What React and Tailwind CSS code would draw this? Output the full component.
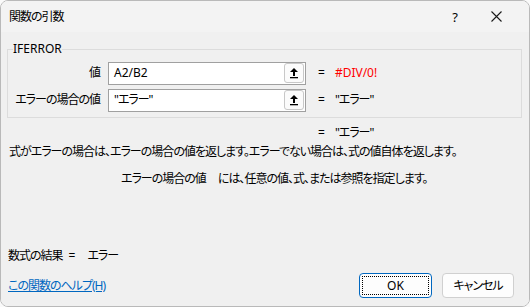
import React from "react";

const jp = "font-['Segoe_UI','Noto_Sans','Noto_Sans_CJK_JP',sans-serif] [font-feature-settings:'palt'] tracking-[-1px]";

const RefButton = () => (
  <span className="flex h-[20px] w-[20px] items-center justify-center rounded-[3px] border border-[#c8c8c8] bg-[#fbfbfb]">
    <svg width="10" height="12" viewBox="0 0 10 12">
      <path d="M5 1 L9 5 L6 5 L6 9 L4 9 L4 5 L1 5 Z" fill="#000" />
      <rect x="1" y="10" width="8" height="1.3" fill="#000" />
    </svg>
  </span>
);

const ArgRow = ({ label, value, result, red }) => (
  <div className="flex h-[22px] items-center">
    <div className="w-[92px] whitespace-nowrap text-right">{label}</div>
    <div className="ml-[8px] flex h-[23px] w-[198px] items-center justify-between border border-[#a0a0a0] bg-white pl-[5px] pr-[1px]">
      <span>{value}</span>
      <RefButton />
    </div>
    <span className="ml-[12px]">=</span>
    <span className={`ml-[11px] ${red ? "tracking-normal text-[#ff0000]" : ""}`}>{result}</span>
  </div>
);

export default function App() {
  return (
    <div className="h-[307px] w-[530px] bg-[#fafafa]">
      <div className={`flex h-full w-full flex-col overflow-hidden rounded-[8px] border border-[#b9b9b9] text-[12px] leading-[16px] text-[#000] ${jp}`}>
        <div className="flex h-[31px] shrink-0 items-center bg-[#f3f3f3] pl-[8px]">
          <span className="flex-1">関数の引数</span>
          <span className="mr-[34px] text-[13px]">?</span>
          <svg className="mr-[27px]" width="11" height="11" viewBox="0 0 11 11">
            <path d="M0.5 0.5 L10.5 10.5 M10.5 0.5 L0.5 10.5" stroke="#1a1a1a" strokeWidth="1.1" />
          </svg>
        </div>
        <div className="flex flex-1 flex-col bg-[#f0f0f0] px-[6px]">
          <fieldset className="mt-[9px] w-[515px] border border-[#dcdcdc] px-0 pb-[6px] pt-[5px]">
            <legend className="ml-[5px] px-0 tracking-normal">IFERROR</legend>
            <div className="flex flex-col gap-[5px]">
              <ArgRow label="値" value={<span className="tracking-normal">A2/B2</span>} result="#DIV/0!" red />
              <ArgRow label="エラーの場合の値" value={'"エラー"'} result={'"エラー"'} />
            </div>
          </fieldset>
          <div className="ml-[311px] mt-[7px] flex">
            <span>=</span>
            <span className="ml-[11px]">"エラー"</span>
          </div>
          <div className="ml-[2px] mt-[3px] whitespace-nowrap">式がエラーの場合は、エラーの場合の値を返します。エラーでない場合は、式の値自体を返します。</div>
          <div className="ml-[114px] mt-[11px] flex whitespace-nowrap">
            <span>エラーの場合の値</span>
            <span className="ml-[12px]">には、任意の値、式、または参照を指定します。</span>
          </div>
          <div className="ml-[1px] mt-[61px] flex">
            <span>数式の結果</span>
            <span className="ml-[6px]">=</span>
            <span className="ml-[13px]">エラー</span>
          </div>
          <div className="mt-[9px] flex items-center">
            <a href="#" className="ml-[1px] flex-1 text-[#0067c0] underline">この関数のヘルプ(H)</a>
            <button className="flex h-[25px] w-[73px] items-center justify-center rounded-[4px] border border-[#0067c0] bg-[#fdfdfd] p-[2px] tracking-normal">
              <span className="flex h-full w-full items-center justify-center border border-dotted border-[#000]">OK</span>
            </button>
            <button className="ml-[10px] mr-[9px] flex h-[25px] w-[72px] items-center justify-center rounded-[4px] border border-[#d0d0d0] bg-[#fdfdfd]">
              キャンセル
            </button>
          </div>
        </div>
      </div>
    </div>
  );
}
